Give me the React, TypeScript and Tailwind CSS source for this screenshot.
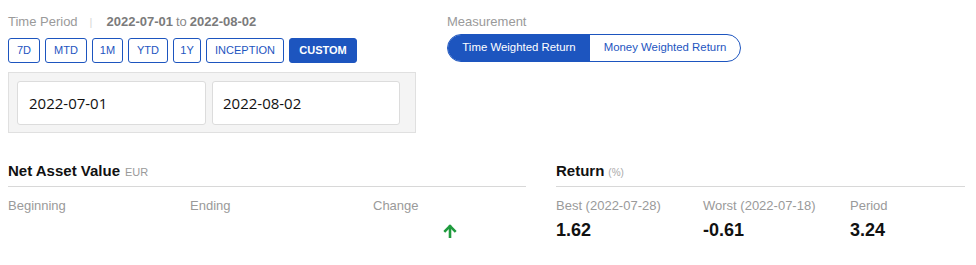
const periods = [
  { label: "7D", w: "w-[32px]" },
  { label: "MTD", w: "w-[42px]" },
  { label: "1M", w: "w-[31px]" },
  { label: "YTD", w: "w-[40px]" },
  { label: "1Y", w: "w-[28px]" },
  { label: "INCEPTION", w: "w-[78px]" },
  { label: "CUSTOM", w: "w-[68px]" },
]

const App = () => {
  return (
    <div className="w-[976px] h-[265px] bg-white text-[#222] font-['Liberation_Sans',Arial,sans-serif]">
      <div className="flex pl-2 pt-[13px]">
        {/* Time period */}
        <div className="w-[439px]">
          <div className="flex items-center h-[18px] text-[13px]">
            <span className="text-[#9a9a9a]">Time Period</span>
            <span className="text-[#d6d6d6] ml-[12px] mr-[14px] text-[11px]">|</span>
            <span className="font-bold text-[#7b7b7b]">2022-07-01</span>
            <span className="text-[#8a8a8a] mx-[3px]">to</span>
            <span className="font-bold text-[#7b7b7b]">2022-08-02</span>
          </div>
          <div className="flex gap-[5px] mt-[7px]">
            {periods.map((p) => (
              <button
                key={p.label}
                className={
                  p.label === "CUSTOM"
                    ? `${p.w} h-[25px] rounded-[3px] border border-[#1d55bf] bg-[#1d55bf] text-white text-[11px] font-bold`
                    : `${p.w} h-[25px] rounded-[3px] border border-[#1d55bf] bg-white text-[#1d55bf] text-[11px]`
                }
              >
                {p.label}
              </button>
            ))}
          </div>
          <div className="mt-[9px] w-[408px] h-[61px] bg-[#f4f4f4] border border-[#e0e0e0] px-[8px] py-[8px] flex gap-[6px]">
            <div className="w-[189px] h-[44px] bg-white border border-[#dcdcdc] rounded-[3px] flex items-center pl-[11px] text-[15px] text-[#111] font-['Open_Sans',sans-serif]">
              2022-07-01
            </div>
            <div className="w-[188px] h-[44px] bg-white border border-[#dcdcdc] rounded-[3px] flex items-center pl-[10px] text-[15px] text-[#111] font-['Open_Sans',sans-serif]">
              2022-08-02
            </div>
          </div>
        </div>

        {/* Measurement */}
        <div>
          <div className="h-[18px] flex items-center text-[13px] text-[#9a9a9a]">Measurement</div>
          <div className="mt-[3px] flex h-[28px] w-[294px] rounded-full border border-[#1d55bf] overflow-hidden text-[11.4px]">
            <div className="w-[142px] bg-[#1d55bf] text-white flex items-center justify-center">
              Time Weighted Return
            </div>
            <div className="flex-1 text-[#1d55bf] flex items-center justify-center">
              Money Weighted Return
            </div>
          </div>
        </div>
      </div>

      <div className="flex pl-2 mt-[27px]">
        {/* Net Asset Value */}
        <div className="w-[518px]">
          <div className="h-[25px] flex items-baseline gap-[5px]">
            <span className="text-[15px] font-bold text-[#111]">Net Asset Value</span>
            <span className="text-[11px] text-[#9a9a9a]">EUR</span>
          </div>
          <div className="border-t border-[#d8d8d8] mt-[1px]" />
          <div className="flex mt-[9px] text-[13px] text-[#9a9a9a]">
            <div className="w-[182px]">Beginning</div>
            <div className="w-[183px]">Ending</div>
            <div className="flex-1">Change</div>
          </div>
          <div className="flex h-[28px] items-center pt-[2px]">
            <div className="w-[435px]" />
            <svg width="14" height="14" viewBox="0 0 14 14" fill="none" stroke="#1f9b3e" strokeWidth="2.6" strokeLinecap="square">
              <path d="M7 13V2.5" />
              <path d="M2.2 7 7 2.2 11.8 7" />
            </svg>
          </div>
        </div>

        {/* Return */}
        <div className="ml-[30px] w-[409px]">
          <div className="h-[25px] flex items-baseline gap-[4px]">
            <span className="text-[15px] font-bold text-[#111]">Return</span>
            <span className="text-[10px] text-[#aaa]">(%)</span>
          </div>
          <div className="border-t border-[#d8d8d8] mt-[1px]" />
          <div className="flex mt-[9px] text-[13px] text-[#9a9a9a]">
            <div className="w-[147px]">Best (2022-07-28)</div>
            <div className="w-[147px]">Worst (2022-07-18)</div>
            <div className="flex-1">Period</div>
          </div>
          <div className="flex h-[28px] items-center pt-[2px] text-[18px] font-bold text-[#111]">
            <div className="w-[147px]">1.62</div>
            <div className="w-[147px]">-0.61</div>
            <div className="flex-1">3.24</div>
          </div>
        </div>
      </div>
    </div>
  )
}

export default App
